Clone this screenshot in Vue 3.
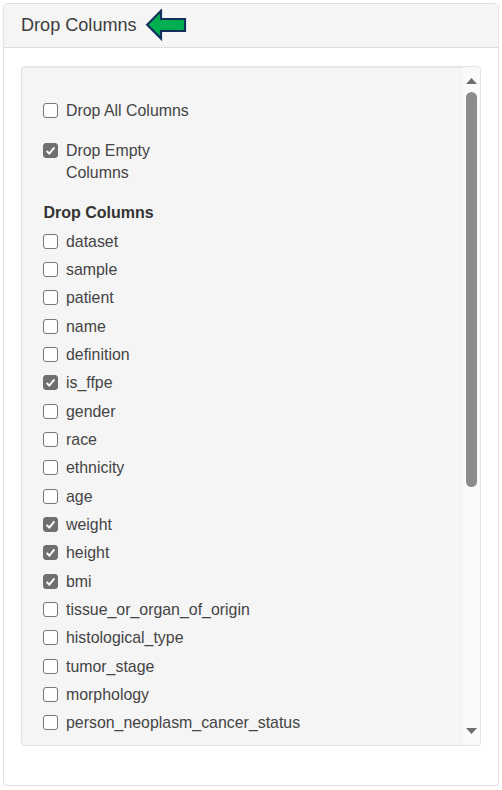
<template>
  <div class="panel">
    <div class="panel-heading">
      <span class="panel-title">Drop Columns</span>
      <svg class="arrow" viewBox="0 0 44 34" width="44" height="34" aria-hidden="true">
        <path d="M3.2 15.7 L17 1.8 V10 H41 V22 H17 V29.6 Z" fill="#00b050" stroke="#12305c" stroke-width="2.2" stroke-linejoin="miter" />
      </svg>
    </div>
    <div class="panel-body">
      <div class="well">
        <div class="well-content">
          <label class="check first">
            <input type="checkbox" />
            <span>Drop All Columns</span>
          </label>
          <label class="check second">
            <input type="checkbox" checked />
            <span class="wrap">Drop Empty Columns</span>
          </label>
          <div class="group-label">Drop Columns</div>
          <label v-for="col in columns" :key="col.name" class="check row">
            <input type="checkbox" :checked="col.checked" />
            <span>{{ col.name }}</span>
          </label>
        </div>
        <div class="scrollbar">
          <svg class="scroll-arrow up" viewBox="0 0 11 6" width="11" height="6" aria-hidden="true">
            <path d="M5.5 0 L11 6 H0 Z" fill="#6e6e6e" />
          </svg>
          <div class="thumb"></div>
          <svg class="scroll-arrow down" viewBox="0 0 11 6" width="11" height="6" aria-hidden="true">
            <path d="M0 0 H11 L5.5 6 Z" fill="#6e6e6e" />
          </svg>
        </div>
      </div>
    </div>
  </div>
</template>

<script setup>
const checkedCols = ["is_ffpe", "weight", "height", "bmi"];

const columns = [
  "dataset",
  "sample",
  "patient",
  "name",
  "definition",
  "is_ffpe",
  "gender",
  "race",
  "ethnicity",
  "age",
  "weight",
  "height",
  "bmi",
  "tissue_or_organ_of_origin",
  "histological_type",
  "tumor_stage",
  "morphology",
  "person_neoplasm_cancer_status",
].map((name) => ({ name, checked: checkedCols.includes(name) }));
</script>

<style>
html,
body {
  margin: 0;
  background: #fff;
}
</style>

<style scoped>
.panel {
  box-sizing: border-box;
  width: 496px;
  height: 783px;
  margin: 3px 0 0 3px;
  border: 1px solid #e3e3e3;
  border-radius: 4px;
  background: #fff;
  font-family: "Liberation Sans", Arial, sans-serif;
  color: #333;
  box-shadow: 0 1px 1px rgba(0, 0, 0, 0.05);
}

.panel-heading {
  box-sizing: border-box;
  height: 44px;
  padding-left: 17px;
  display: flex;
  align-items: center;
  gap: 7px;
  background: #f5f5f5;
  border-bottom: 1px solid #ddd;
  border-radius: 3px 3px 0 0;
}
.panel-title {
  font-size: 18.1px;
  color: #3c3c3c;
}
.arrow {
  flex: none;
}

.panel-body {
  padding: 18px 17px 0;
}

.well {
  box-sizing: border-box;
  width: 460px;
  height: 680px;
  display: flex;
  overflow: hidden;
  background: #f5f5f5;
  border: 1px solid #e3e3e3;
  border-radius: 4px;
  box-shadow: inset 0 1px 1px rgba(0, 0, 0, 0.05);
}

.well-content {
  flex: 1;
  min-width: 0;
  padding: 33px 0 0 21px;
  overflow: hidden;
}

.check {
  display: flex;
  align-items: flex-start;
  gap: 8px;
  font-size: 15.9px;
  line-height: 22px;
  color: #444;
}
.check input {
  appearance: none;
  box-sizing: border-box;
  flex: none;
  width: 15px;
  height: 15px;
  margin: 3px 0 0;
  border: 1px solid #767676;
  border-radius: 3px;
  background: #fff;
}
.check input:checked {
  border-color: #6f6f6f;
  background: #6f6f6f url("data:image/svg+xml,%3Csvg xmlns='http://www.w3.org/2000/svg' viewBox='0 0 15 15'%3E%3Cpath d='M3 8 L6.2 11 L12 4' fill='none' stroke='white' stroke-width='2.2'/%3E%3C/svg%3E") center / 100% no-repeat;
}

.first {
  margin-bottom: 18px;
}
.second {
  margin-bottom: 18px;
}
.wrap {
  width: 100px;
}

.group-label {
  font-size: 16px;
  font-weight: bold;
  line-height: 22px;
  margin-bottom: 6.6px;
  margin-left: 0.5px;
  color: #333;
}

.row {
  height: 28.35px;
}

.scrollbar {
  flex: none;
  width: 17px;
  display: flex;
  flex-direction: column;
  align-items: center;
  background: #fafafa;
  box-sizing: border-box;
}
.scroll-arrow {
  flex: none;
  display: block;
}
.scroll-arrow.up {
  margin-top: 11px;
}
.scroll-arrow.down {
  margin-top: auto;
  margin-bottom: 11px;
}
.thumb {
  flex: none;
  width: 11px;
  height: 395px;
  margin-top: 8px;
  border-radius: 6px;
  background: #8c8c8c;
}
</style>
